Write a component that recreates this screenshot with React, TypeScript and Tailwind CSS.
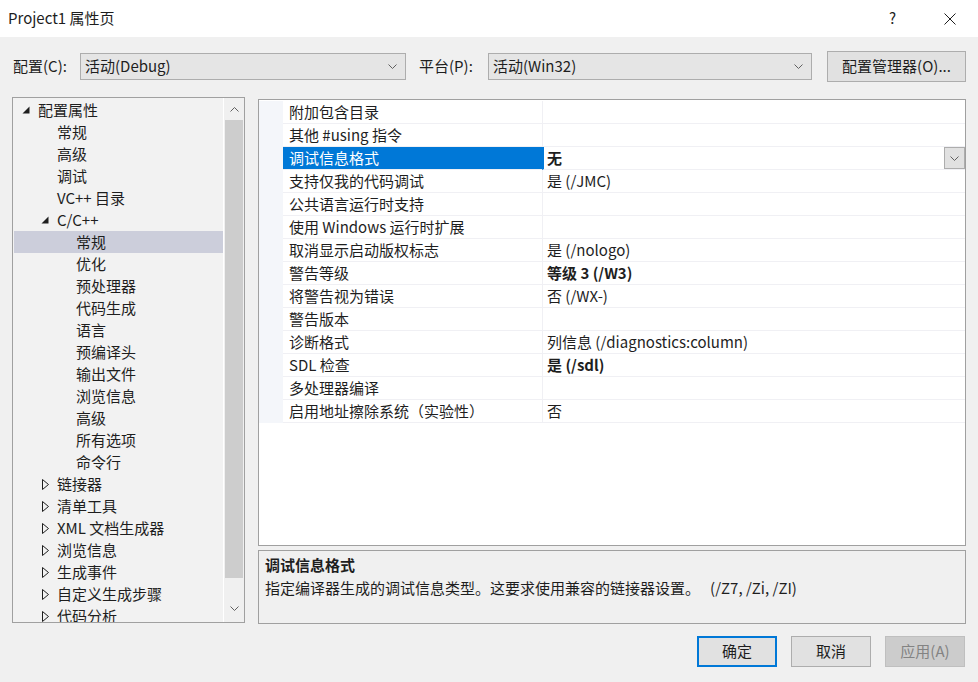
import type { ReactElement } from "react";

const FONT = "font-['Microsoft_YaHei_UI','Noto_Sans_CJK_SC','Noto_Sans',sans-serif]";

type TreeItem = { label: string; level: 0 | 1 | 2; arrow?: "open" | "closed"; selected?: boolean };

const TREE: TreeItem[] = [
  { label: "配置属性", level: 0, arrow: "open" },
  { label: "常规", level: 1 },
  { label: "高级", level: 1 },
  { label: "调试", level: 1 },
  { label: "VC++ 目录", level: 1 },
  { label: "C/C++", level: 1, arrow: "open" },
  { label: "常规", level: 2, selected: true },
  { label: "优化", level: 2 },
  { label: "预处理器", level: 2 },
  { label: "代码生成", level: 2 },
  { label: "语言", level: 2 },
  { label: "预编译头", level: 2 },
  { label: "输出文件", level: 2 },
  { label: "浏览信息", level: 2 },
  { label: "高级", level: 2 },
  { label: "所有选项", level: 2 },
  { label: "命令行", level: 2 },
  { label: "链接器", level: 1, arrow: "closed" },
  { label: "清单工具", level: 1, arrow: "closed" },
  { label: "XML 文档生成器", level: 1, arrow: "closed" },
  { label: "浏览信息", level: 1, arrow: "closed" },
  { label: "生成事件", level: 1, arrow: "closed" },
  { label: "自定义生成步骤", level: 1, arrow: "closed" },
  { label: "代码分析", level: 1, arrow: "closed" }
];

// indent per level — written out so tailwind picks them up
const INDENT = ["pl-[8px]", "pl-[27px]", "pl-[46px]"];

type Prop = { name: string; value?: string; bold?: boolean; selected?: boolean };

const PROPS: Prop[] = [
  { name: "附加包含目录" },
  { name: "其他 #using 指令" },
  { name: "调试信息格式", value: "无", bold: true, selected: true },
  { name: "支持仅我的代码调试", value: "是 (/JMC)" },
  { name: "公共语言运行时支持" },
  { name: "使用 Windows 运行时扩展" },
  { name: "取消显示启动版权标志", value: "是 (/nologo)" },
  { name: "警告等级", value: "等级 3 (/W3)", bold: true },
  { name: "将警告视为错误", value: "否 (/WX-)" },
  { name: "警告版本" },
  { name: "诊断格式", value: "列信息 (/diagnostics:column)" },
  { name: "SDL 检查", value: "是 (/sdl)", bold: true },
  { name: "多处理器编译" },
  { name: "启用地址擦除系统（实验性）", value: "否" }
];

function Chevron({ up = false, className = "" }: { up?: boolean; className?: string }): ReactElement {
  return (
    <svg width="9" height="5" viewBox="0 0 9 5" className={className} aria-hidden="true">
      <polyline
        points={up ? "0.5,4.5 4.5,0.5 8.5,4.5" : "0.5,0.5 4.5,4.5 8.5,0.5"}
        fill="none"
        stroke="currentColor"
        strokeWidth="1"
      />
    </svg>
  );
}

function TreeArrow({ kind }: { kind?: "open" | "closed" }): ReactElement {
  return (
    <span className="flex w-[16px] shrink-0 items-center">
      {kind === "open" && (
        <svg width="8" height="8" viewBox="0 0 8 8" aria-hidden="true">
          <polygon points="7.5,0.5 7.5,7.5 0.5,7.5" fill="#1e1e1e" />
        </svg>
      )}
      {kind === "closed" && (
        <svg width="8" height="11" viewBox="0 0 8 11" className="ml-[1px]" aria-hidden="true">
          <polygon points="0.5,0.5 6.5,5.5 0.5,10.5" fill="none" stroke="#1e1e1e" strokeWidth="1" />
        </svg>
      )}
    </span>
  );
}

function Combo({ text, width }: { text: string; width: string }): ReactElement {
  return (
    <div
      className={`flex h-[27px] ${width} items-center justify-between border border-[#adadad] bg-[#e5e5e5] pl-[4px] pr-[8px] text-[15px] text-[#1e1e1e]`}
    >
      <span>{text}</span>
      <Chevron className="text-[#606060]" />
    </div>
  );
}

function TreePanel(): ReactElement {
  return (
    <div className="flex h-[526px] w-[233px] shrink-0 border border-[#a0a0a0] bg-[#f2f2f2]">
      <div className="min-w-0 flex-1 overflow-hidden pl-[1px] pt-[1px]">
        {TREE.map((item, i) => (
          <div
            key={i}
            className={`flex h-[22px] items-center ${INDENT[item.level]} ${
              item.selected ? "bg-[#cccedb]" : ""
            }`}
          >
            <TreeArrow kind={item.arrow} />
            <span className="whitespace-nowrap text-[15px] leading-[22px] text-[#1e1e1e]">{item.label}</span>
          </div>
        ))}
      </div>
      <div className="flex w-[21px] shrink-0 flex-col border-l border-white bg-[#f0f0f0]">
        <div className="flex h-[22px] items-center justify-center text-[#606060]">
          <Chevron up />
        </div>
        <div className="mx-[1px] h-[458px] bg-[#cdcdcd]" />
        <div className="flex flex-1 items-start justify-center pt-[28px] text-[#606060]">
          <Chevron />
        </div>
      </div>
    </div>
  );
}

function PropertyGrid(): ReactElement {
  return (
    <div className="mt-[2px] h-[447px] border border-[#a0a0a0] bg-white pt-[1px]">
      {PROPS.map((p, i) => (
        <div key={i} className="flex h-[23px]">
          <div className="w-[24px] shrink-0 bg-[#f4f6fa]" />
          <div
            className={`flex w-[259px] shrink-0 items-center border-b border-[#f0f0f4] pl-[6px] text-[15px] ${
              p.selected ? "bg-[#0078d7] text-white" : "text-[#1e1e1e]"
            }`}
          >
            <span className="whitespace-nowrap">{p.name}</span>
          </div>
          <div
            className={`flex min-w-0 flex-1 items-center justify-between border-b border-[#f0f0f4] text-[15px] text-[#1e1e1e] ${
              p.selected ? "border-l-2 border-l-[#0078d7] pl-[3px]" : "border-l border-l-[#f0f0f4] pl-[4px]"
            } ${p.bold ? "font-bold" : ""}`}
          >
            <span className="whitespace-nowrap">{p.value ?? ""}</span>
            {p.selected && (
              <div className="flex h-[22px] w-[21px] items-center justify-center border border-[#adadad] bg-[#e1e1e1] text-[#606060]">
                <Chevron />
              </div>
            )}
          </div>
        </div>
      ))}
    </div>
  );
}

function DialogButton({
  label,
  variant
}: {
  label: string;
  variant: "default" | "normal" | "disabled";
}): ReactElement {
  const style =
    variant === "default"
      ? "border-2 border-[#0078d7] bg-[#e1e1e1] text-[#1e1e1e]"
      : variant === "disabled"
        ? "border border-[#bfbfbf] bg-[#cccccc] text-[#838383]"
        : "border border-[#adadad] bg-[#e1e1e1] text-[#1e1e1e]";
  return (
    <div className={`flex h-[31px] w-[80px] items-center justify-center text-[15px] ${style}`}>{label}</div>
  );
}

export default function App(): ReactElement {
  return (
    <div className={`flex h-[682px] w-[978px] flex-col overflow-hidden bg-[#f0f0f0] ${FONT}`}>
      {/* title bar */}
      <div className="flex h-[37px] shrink-0 items-center bg-white pl-[8px] pr-[22px] text-[15px] text-[#1e1e1e]">
        <span>Project1 属性页</span>
        <span className="ml-auto mr-[48px] text-[15px]">?</span>
        <svg width="12" height="12" viewBox="0 0 12 12" aria-hidden="true">
          <path d="M0.5 0.5 L11.5 11.5 M11.5 0.5 L0.5 11.5" stroke="#1e1e1e" strokeWidth="1" />
        </svg>
      </div>

      {/* configuration row */}
      <div className="mt-[14px] flex h-[30px] shrink-0 items-center pl-[13px] text-[15px] text-[#1e1e1e]">
        <span className="w-[67px]">配置(C):</span>
        <Combo text="活动(Debug)" width="w-[326px]" />
        <span className="ml-[13px] w-[69px]">平台(P):</span>
        <Combo text="活动(Win32)" width="w-[324px]" />
        <div className="ml-[15px] flex h-[31px] w-[139px] items-center justify-center border border-[#adadad] bg-[#e1e1e1]">
          配置管理器(O)...
        </div>
      </div>

      {/* main area */}
      <div className="mt-[16px] flex gap-[13px] pl-[12px] pr-[12px]">
        <TreePanel />
        <div className="flex min-w-0 flex-1 flex-col">
          <PropertyGrid />
          <div className="mt-[4px] h-[74px] border border-[#a0a0a0] bg-[#f0f0f0] px-[6px] pt-[2px] text-[15px] text-[#1e1e1e]">
            <div className="h-[23px] font-bold leading-[23px]">调试信息格式</div>
            <div className="h-[23px] whitespace-pre leading-[23px]">
              {"指定编译器生成的调试信息类型。这要求使用兼容的链接器设置。   (/Z7, /Zi, /ZI)"}
            </div>
          </div>
        </div>
      </div>

      {/* dialog buttons */}
      <div className="mt-[12px] flex justify-end gap-[14px] pr-[13px]">
        <DialogButton label="确定" variant="default" />
        <DialogButton label="取消" variant="normal" />
        <DialogButton label="应用(A)" variant="disabled" />
      </div>
    </div>
  );
}
